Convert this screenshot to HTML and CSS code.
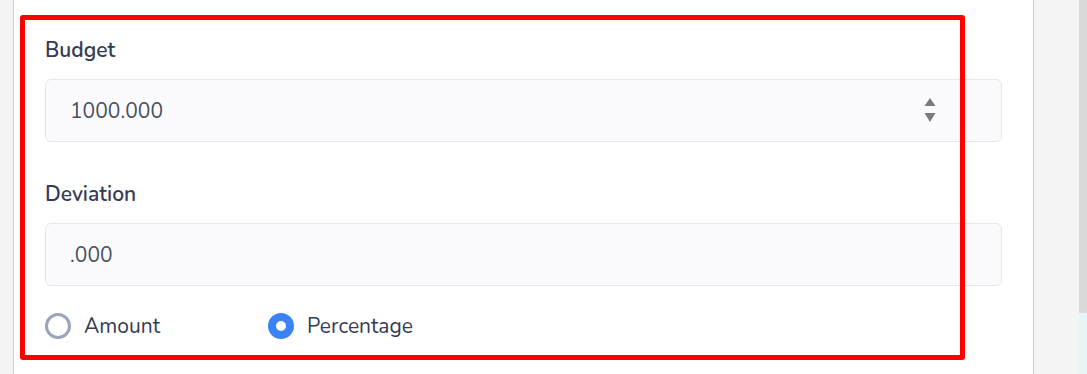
FILE: index.html
```html
<!DOCTYPE html>
<html lang="en">
<head>
    <meta charset="UTF-8" />
    <meta name="viewport" content="width=device-width, initial-scale=1" />
    <title>Budget</title>
    <link rel="stylesheet" href="styles.css">
</head>
<body>
    <div class="page">
        <div class="side-left"></div>
        <div class="main">
            <div class="highlight"></div>
            <div class="field">
                <label class="field-label">Budget</label>
                <div class="input">
                    <span class="value">1000.000</span>
                    <span class="spinner">
                        <svg width="12" height="25" viewBox="0 0 12 25">
                            <path d="M6 0 L11.5 8 L0.5 8 Z" fill="#7a7a7a" />
                            <path d="M0.5 15 L11.5 15 L6 24 Z" fill="#7a7a7a" />
                        </svg>
                    </span>
                </div>
            </div>
            <div class="field field-second">
                <label class="field-label">Deviation</label>
                <div class="input">
                    <span class="value">.000</span>
                </div>
            </div>
            <div class="radios">
                <label class="radio">
                    <span class="dot"></span>
                    Amount
                </label>
                <label class="radio">
                    <span class="dot checked"></span>
                    Percentage
                </label>
            </div>
        </div>
        <div class="side-right"></div>
        <div class="scrollbar">
            <div class="thumb"></div>
        </div>
    </div>
</body>
</html>
```

FILE: styles.css
```css
html, body {
    margin: 0;
    padding: 0;
    height: 100%;
}
body {
    font-family: "Nunito", Lato, "Noto Sans", sans-serif;
    background: white;
    overflow: hidden;
}
.page {
    display: flex;
    height: 374px;
}
.side-left {
    width: 13px;
    background: #f4f4f4;
    border-right: 1px solid #d2d2d2;
}
.main {
    flex: 1;
    position: relative;
    padding: 37px 31px 0 31px;
}
.highlight {
    position: absolute;
    left: 6px;
    top: 15px;
    width: 935px;
    height: 335px;
    border: 5px solid #ff0000;
    border-radius: 3px;
    pointer-events: none;
}
.field-label {
    display: block;
    font-size: 21px;
    font-weight: 600;
    color: #343b55;
    line-height: 26px;
    margin-bottom: 16px;
}
.field-second {
    margin-top: 39px;
}
.input {
    display: flex;
    align-items: center;
    height: 61px;
    border: 1px solid #e6e5f6;
    border-radius: 6px;
    background: #fbfbfe;
    padding: 0 65px 0 24px;
}
.value {
    flex: 1;
    font-size: 21px;
    color: #4a5060;
}
.spinner {
    display: flex;
}
.radios {
    display: flex;
    margin-top: 26px;
}
.radio {
    display: flex;
    align-items: center;
    font-size: 21px;
    color: #343b55;
    width: 223px;
}
.dot {
    width: 20px;
    height: 20px;
    border: 3px solid #9aa5b8;
    border-radius: 50%;
    margin-right: 13px;
}
.dot.checked {
    width: 10px;
    height: 10px;
    border: 8px solid #3b82f6;
    background: white;
}
.side-right {
    width: 45px;
    background: #f4f4f4;
    border-left: 1px solid #cccccc;
}
.scrollbar {
    width: 8px;
    background: #e6f5f5;
}
.thumb {
    height: 313px;
    background: #dad8da;
}
```
